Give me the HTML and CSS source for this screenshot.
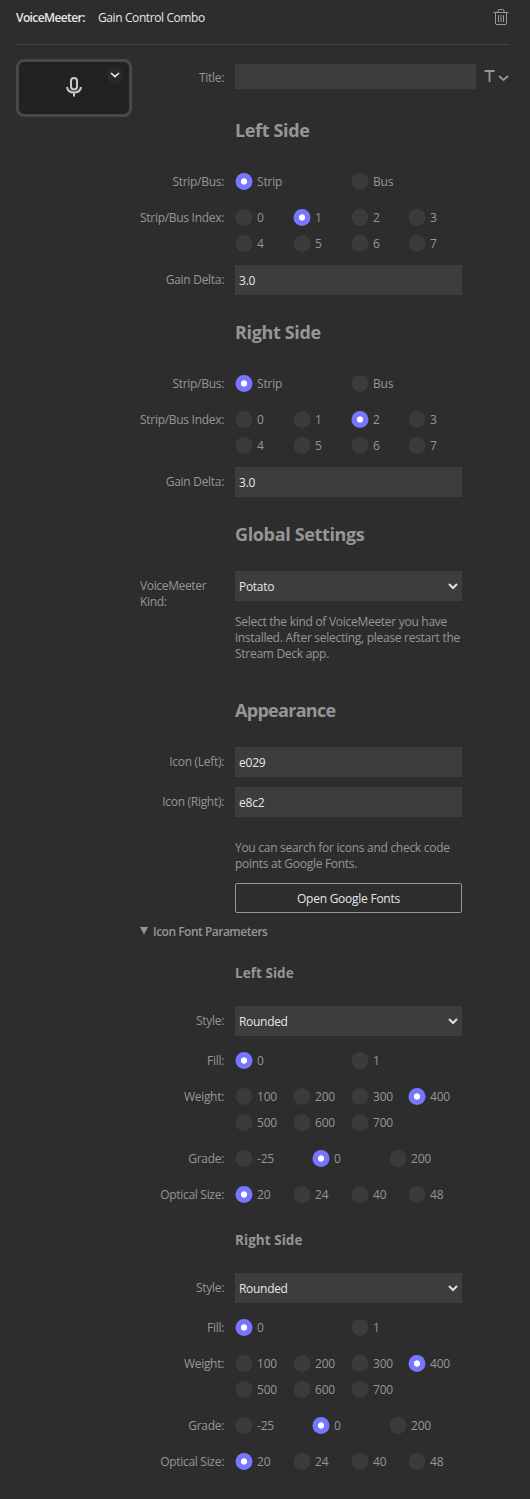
FILE: index.html
```
<!DOCTYPE html>
<html lang="en">
<head>
<meta charset="utf-8">
<title>VoiceMeeter: Gain Control Combo</title>
<link rel="stylesheet" href="styles.css">
</head>
<body>
<header class="header">
  <span class="plugin">VoiceMeeter:</span>
  <span class="action">Gain Control Combo</span>
  <svg class="trash" width="16" height="17" viewBox="0 0 16 17" fill="none" stroke="#9a9a9a"><path d="M0.5 3.5H15.5M5 3.5V2Q5 0.5 6.3 0.5H9.7Q11 0.5 11 2V3.5M2.5 3.5V14.5Q2.5 15.500 4 15.500H12Q13.500 15.500 13.500 14.5V3.500M5.500 6V13M8 6V13M10.500 6V13"/></svg>
</header>
<main class="main">
  <div class="key">
    <svg class="mic" width="18" height="22" viewBox="0 0 18 22" fill="none" stroke="#c8c8c8" stroke-width="2"><rect x="6" y="2" width="6" height="11.500" rx="3"/><path d="M2 11C2.500 14.800 5.400 16.500 9 16.500S15.500 14.800 16 11M9 16V20.500"/></svg>
    <span class="key-menu"><svg width="10" height="6" viewBox="0 0 10 6" fill="none" stroke="#eee" stroke-width="1.6"><path d="M1 1L5 4.600L9 1"/></svg></span>
  </div>
  <div class="form">
    <div class="row title-row"><label class="label">Title:</label><div class="field title-field"></div>
      <svg class="font-menu" width="26" height="14" viewBox="0 0 26 14" fill="none" stroke="#969696"><path stroke-width="1.800" d="M0.500 2H10.500M5.500 2V13"/><path stroke-width="1.700" d="M15 7L19.500 11L24 7"/></svg>
    </div>
    <h2 class="h2 first">Left Side</h2>
    <div class="row"><label class="label">Strip/Bus:</label><div class="radios two"><span class="radio on">Strip</span><span class="radio">Bus</span></div></div>
    <div class="row"><label class="label">Strip/Bus Index:</label><div class="radios"><span class="radio">0</span><span class="radio on">1</span><span class="radio">2</span><span class="radio">3</span><span class="radio">4</span><span class="radio">5</span><span class="radio">6</span><span class="radio">7</span></div></div>
    <div class="row"><label class="label">Gain Delta:</label><div class="field">3.0</div></div>
    <h2 class="h2">Right Side</h2>
    <div class="row"><label class="label">Strip/Bus:</label><div class="radios two"><span class="radio on">Strip</span><span class="radio">Bus</span></div></div>
    <div class="row"><label class="label">Strip/Bus Index:</label><div class="radios"><span class="radio">0</span><span class="radio">1</span><span class="radio on">2</span><span class="radio">3</span><span class="radio">4</span><span class="radio">5</span><span class="radio">6</span><span class="radio">7</span></div></div>
    <div class="row"><label class="label">Gain Delta:</label><div class="field">3.0</div></div>
    <h2 class="h2">Global Settings</h2>
    <div class="row kind-row"><label class="label wrap">VoiceMeeter<br>Kind:</label><div class="field select">Potato<svg class="arrow" width="10" height="7" viewBox="0 0 10 7" fill="none" stroke="#e0e0e0" stroke-width="2"><path d="M1 1L5 5L9 1"/></svg></div></div>
    <p class="note kind-note">Select the kind of VoiceMeeter you have<br>installed. After selecting, please restart the<br>Stream Deck app.</p>
    <h2 class="h2 spaced">Appearance</h2>
    <div class="row"><label class="label">Icon (Left):</label><div class="field">e029</div></div>
    <div class="row"><label class="label">Icon (Right):</label><div class="field">e8c2</div></div>
    <p class="note icon-note">You can search for icons and check code<br>points at Google Fonts.</p>
    <button class="button">Open Google Fonts</button>
    <div class="summary"><svg width="8" height="8" viewBox="0 0 8 8"><path fill="#969696" d="M0 0H8L4 7.500Z"/></svg><span>Icon Font Parameters</span></div>
    <h3 class="h3">Left Side</h3>
    <div class="row"><label class="label">Style:</label><div class="field select">Rounded<svg class="arrow" width="10" height="7" viewBox="0 0 10 7" fill="none" stroke="#e0e0e0" stroke-width="2"><path d="M1 1L5 5L9 1"/></svg></div></div>
    <div class="row"><label class="label">Fill:</label><div class="radios two"><span class="radio on">0</span><span class="radio">1</span></div></div>
    <div class="row"><label class="label">Weight:</label><div class="radios"><span class="radio">100</span><span class="radio">200</span><span class="radio">300</span><span class="radio on">400</span><span class="radio">500</span><span class="radio">600</span><span class="radio">700</span></div></div>
    <div class="row"><label class="label">Grade:</label><div class="radios three"><span class="radio">-25</span><span class="radio on">0</span><span class="radio">200</span></div></div>
    <div class="row"><label class="label">Optical Size:</label><div class="radios"><span class="radio on">20</span><span class="radio">24</span><span class="radio">40</span><span class="radio">48</span></div></div>
    <h3 class="h3">Right Side</h3>
    <div class="row"><label class="label">Style:</label><div class="field select">Rounded<svg class="arrow" width="10" height="7" viewBox="0 0 10 7" fill="none" stroke="#e0e0e0" stroke-width="2"><path d="M1 1L5 5L9 1"/></svg></div></div>
    <div class="row"><label class="label">Fill:</label><div class="radios two"><span class="radio on">0</span><span class="radio">1</span></div></div>
    <div class="row"><label class="label">Weight:</label><div class="radios"><span class="radio">100</span><span class="radio">200</span><span class="radio">300</span><span class="radio on">400</span><span class="radio">500</span><span class="radio">600</span><span class="radio">700</span></div></div>
    <div class="row"><label class="label">Grade:</label><div class="radios three"><span class="radio">-25</span><span class="radio on">0</span><span class="radio">200</span></div></div>
    <div class="row"><label class="label">Optical Size:</label><div class="radios"><span class="radio on">20</span><span class="radio">24</span><span class="radio">40</span><span class="radio">48</span></div></div>
  </div>
</main>
</body>
</html>
```
FILE: styles.css
```
* { box-sizing: border-box; }
html { background: #2d2d2d; }
body {
  margin: 0;
  height: 1499px;
  overflow: hidden;
  background: #2d2d2d;
  color: #969696;
  font: 12px/16px "Open Sans", "Noto Sans", sans-serif;
  letter-spacing: -0.2px;
}
.header {
  display: flex;
  align-items: flex-start;
  height: 45px;
  margin: 0 20px 0 16px;
  padding-top: 9px;
  border-bottom: 1px solid #444;
  color: #e6e6e6;
}
.plugin { width: 82px; padding-top: 1px; font-weight: 600; letter-spacing: -0.6px; }
.action { padding-top: 1px; letter-spacing: -0.4px; }
.trash { margin: 0 1px 0 auto; }
.main { display: flex; padding: 14px 0 0 16px; }
.key {
  position: relative;
  flex: none;
  width: 116px;
  height: 58px;
  border: 3px solid #484848;
  border-radius: 8px;
  background: #222;
}
.mic { position: absolute; left: 46px; top: 14px; }
.key-menu {
  position: absolute;
  right: 5.5px;
  top: 4.500px;
  display: grid;
  place-items: center;
  width: 17px;
  height: 17px;
  border-radius: 50%;
  background: #292929;
}
.form { width: 390px; padding: 5px 0 0 8px; }
.row { display: flex; align-items: flex-start; width: 322px; }
.row + .row { margin-top: 10px; }
.kind-row { height: 30px; }
.label {
  flex: none;
  width: 84px;
  margin-right: 11px;
  padding-top: 7px;
  text-align: right;
  white-space: nowrap;
  letter-spacing: -0.3px;
}
.label.wrap { text-align: left; letter-spacing: -0.35px; }
.field {
  width: 227px;
  height: 30px;
  padding: 8px 4px 6px;
  background: #3d3d3d;
  color: #e6e6e6;
}
.title-row { width: 374px; }
.title-row .label { padding-top: 6px; }
.title-field { width: 241px; height: 25px; }
.font-menu { margin: 5px 0 0 8px; }
.select { display: flex; justify-content: space-between; letter-spacing: -0.3px; }
.arrow { margin-top: 4px; }
.radios {
  display: grid;
  grid-template-columns: 58px 58px 57px 54px;
  grid-auto-rows: 26px;
  width: 227px;
}
.radios.two { grid-template-columns: 116px 111px; }
.radios.three { grid-template-columns: 77px 77px 73px; }
.radio { display: flex; align-items: center; padding-top: 3px; white-space: nowrap; }
.radio::before {
  content: "";
  width: 17px;
  height: 17px;
  margin: -1px 4.500px 0 0.500px;
  border-radius: 50%;
  background: #3b3b3b;
  transform: translateX(-0.5px);
}
.radio.on::before { background: radial-gradient(circle, #fff 2.800px, #7776ff 3.500px); }
.h2 {
  height: 74px;
  margin: 0 0 0 95px;
  font-size: 18px;
  font-weight: 700;
  line-height: 75px;
  letter-spacing: -0.35px;
}
.h2.first { margin-top: 4px; }
.h2.spaced { margin-top: 11px; letter-spacing: -0.7px; }
.h3 {
  height: 67px;
  margin: 0 0 0 95px;
  font-size: 13.5px;
  font-weight: 700;
  line-height: 69px;
  letter-spacing: 0.05px;
}
.note { margin: 0 0 0 95px; white-space: nowrap; letter-spacing: -0.28px; }
.kind-note { padding-top: 13px; }
.icon-note { padding-top: 23px; }
.button {
  display: block;
  width: 227px;
  height: 30px;
  margin: 11px 0 0 95px;
  padding: 1px 0 0;
  border: 1px solid #969696;
  border-radius: 2px;
  background: transparent;
  color: #e6e6e6;
  font: inherit;
  letter-spacing: -0.25px;
}
.summary {
  display: flex;
  align-items: center;
  gap: 5px;
  height: 16px;
  margin: 10px 0 0;
  font-weight: 600;
  letter-spacing: -0.5px;
}
.summary span { padding-top: 2px; }
```
